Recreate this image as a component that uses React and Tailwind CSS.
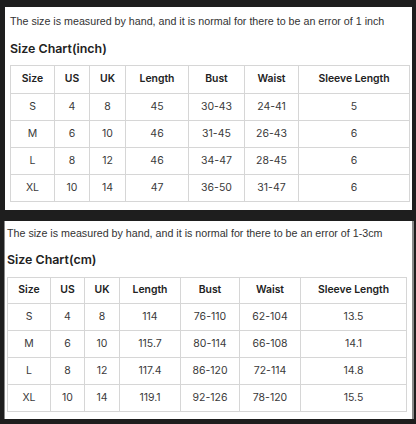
import React from "react";

const inchRows = [
	["S", "4", "8", "45", "30-43", "24-41", "5"],
	["M", "6", "10", "46", "31-45", "26-43", "6"],
	["L", "8", "12", "46", "34-47", "28-45", "6"],
	["XL", "10", "14", "47", "36-50", "31-47", "6"],
];

const cmRows = [
	["S", "4", "8", "114", "76-110", "62-104", "13.5"],
	["M", "6", "10", "115.7", "80-114", "66-108", "14.1"],
	["L", "8", "12", "117.4", "86-120", "72-114", "14.8"],
	["XL", "10", "14", "119.1", "92-126", "78-120", "15.5"],
];

const heads = ["Size", "US", "UK", "Length", "Bust", "Waist", "Sleeve Length"];

const SizeTable = ({ rows, widths, headH }) => (
	<table className="border-collapse table-fixed text-[10.5px] text-[#3a3a3a]" style={{ width: 399 }}>
		<colgroup>
			{widths.map((w, i) => (
				<col key={i} style={{ width: w }} />
			))}
		</colgroup>
		<thead>
			<tr>
				{heads.map((h) => (
					<th key={h} className={`border border-[#d6d6d6] font-semibold text-[10.4px] text-[#222] text-center p-0 leading-none ${headH}`}>
						{h}
					</th>
				))}
			</tr>
		</thead>
		<tbody>
			{rows.map((r) => (
				<tr key={r[0]}>
					{r.map((c, i) => (
						<td key={i} className="border border-[#d6d6d6] text-center p-0 leading-none h-[27px]">
							{c}
						</td>
					))}
				</tr>
			))}
		</tbody>
	</table>
);

export default function App() {
	return (
		<div className="w-[416px] h-[424px] bg-[#1e1e1e] pt-[7px] font-['Inter',sans-serif] overflow-hidden">
			<div className="ml-[5px] w-[407px] h-[203px] bg-white pl-[5px] pt-[6px]">
				<p className="font-['Liberation_Sans',sans-serif] text-[10.7px] text-[#333] leading-[16px] whitespace-nowrap">
					The size is measured by hand, and it is normal for there to be an error of 1 inch
				</p>
				<h2 className="mt-[11px] text-[12.4px] font-semibold text-[#222] leading-[18px]">Size Chart(inch)</h2>
				<div className="mt-[7px]">
					<SizeTable rows={inchRows} widths={[44, 35, 36, 63, 56, 54, 111]} headH="h-[28px]" />
				</div>
			</div>
			<div className="mt-[11px] ml-[4px] w-[410px] h-[198px] bg-white border-l border-r-2 border-[#8a8a8a] pl-[2px] pt-[4px]">
				<p className="font-['Liberation_Sans',sans-serif] text-[10.7px] text-[#333] leading-[16px] whitespace-nowrap">
					The size is measured by hand, and it is normal for there to be an error of 1-3cm
				</p>
				<h2 className="mt-[10px] text-[12.4px] font-semibold text-[#222] leading-[18px]">Size Chart(cm)</h2>
				<div className="mt-[8px]">
					<SizeTable rows={cmRows} widths={[43, 34, 35, 61, 59, 61, 106]} headH="h-[26px]" />
				</div>
			</div>
		</div>
	);
}
